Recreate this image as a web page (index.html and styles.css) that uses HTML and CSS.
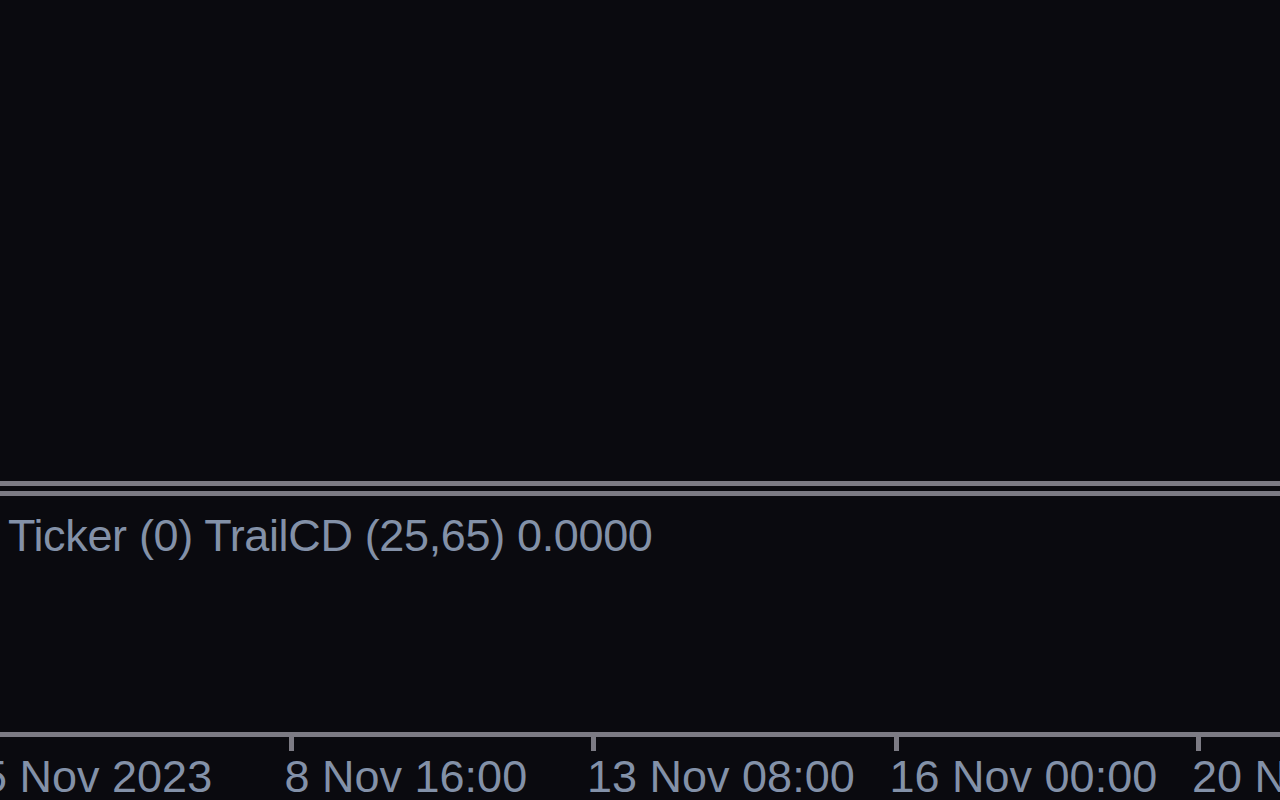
FILE: index.html
```html
<!DOCTYPE html>
<html lang="en">
<head>
  <meta charset="UTF-8">
  <title>Chart - TrailCD</title>
  <link rel="stylesheet" href="styles.css">
</head>
<body>
  <div class="main-window"></div>

  <div class="separator"></div>
  <div class="separator"></div>

  <div class="sub-window">
    <div class="sub-label">Ticker (0) TrailCD (25,65) 0.0000</div>
  </div>

  <div class="time-axis">
    <div class="tick-cell first">
      <div class="tick"></div>
      <div class="tick-label">5 Nov 2023</div>
    </div>
    <div class="tick-cell">
      <div class="tick"></div>
      <div class="tick-label">8 Nov 16:00</div>
    </div>
    <div class="tick-cell">
      <div class="tick"></div>
      <div class="tick-label">13 Nov 08:00</div>
    </div>
    <div class="tick-cell">
      <div class="tick"></div>
      <div class="tick-label">16 Nov 00:00</div>
    </div>
    <div class="tick-cell">
      <div class="tick"></div>
      <div class="tick-label">20 Nov 16:00</div>
    </div>
  </div>
</body>
</html>
```

FILE: styles.css
```css
body {
  margin: 0;
  height: 800px;
  overflow: hidden;
  background: #0a0a0f;
  color: #8391a8;
  font-family: 'Liberation Sans', Arial, sans-serif;
  font-size: 45px;
  line-height: 45px;
}

.main-window {
  height: 481px;
}

.separator {
  height: 5px;
  background: #7c7b84;
}

.separator + .separator {
  margin-top: 5px;
}

.sub-window {
  height: 236px;
}

.sub-label {
  padding-top: 17px;
  padding-left: 8px;
  letter-spacing: -0.35px;
  white-space: nowrap;
}

.time-axis {
  border-top: 5px solid #7c7b84;
  display: flex;
  margin-left: -18px;
  white-space: nowrap;
}

.tick-cell {
  flex: 0 0 302.5px;
}

.tick {
  width: 5px;
  height: 14px;
  margin-left: 4px;
  background: #7c7b84;
}

.tick-cell.first .tick {
  visibility: hidden;
}

.tick-label {
  margin-top: 3px;
  letter-spacing: 0;
}
```
